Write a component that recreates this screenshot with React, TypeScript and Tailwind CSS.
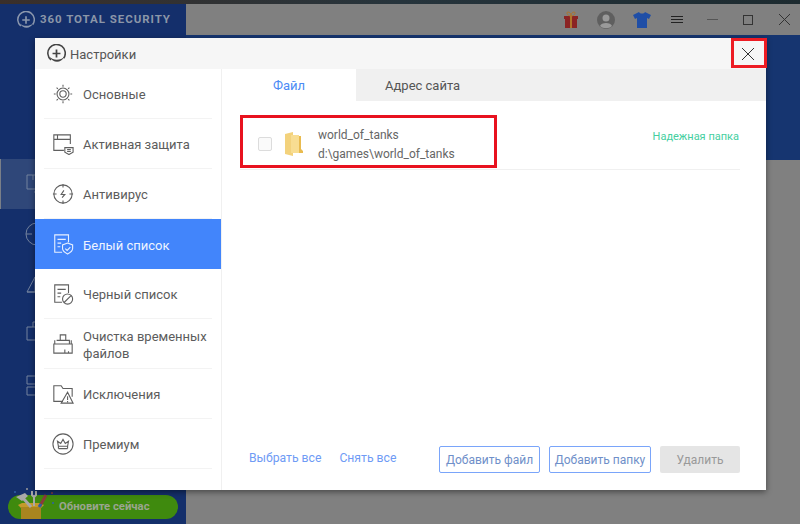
const ink = "#5f5f5f";

function LogoMark({ color, size }: { color: string; size: number }) {
  return (
    <svg width={size} height={size} viewBox="0 0 24 24" fill="none" className="shrink-0">
      <path d="M5 20A11 11 0 1 1 21 18" stroke={color} strokeWidth="2" />
      <path d="M3 16C8 24 17 25 22 16C18 20 9 22 3 16Z" fill={color} />
      <path d="M12 7v10M7 12h10" stroke={color} strokeWidth="2.2" />
    </svg>
  );
}

function Line({ d, color = ink }: { d: string; color?: string }) {
  return (
    <svg width="22" height="22" viewBox="0 0 24 24" fill="none" stroke={color} strokeWidth="1.2" className="shrink-0">
      <path d={d} />
    </svg>
  );
}

const icons: Record<string, string> = {
  gear: "M12 5.500a6.500 6.500 0 1 1 0 13a6.500 6.500 0 1 1 0-13M12 8.500a3.500 3.500 0 1 1 0 7a3.500 3.500 0 1 1 0-7M12 2v2M12 20v2M2 12h2M20 12h2M5 5l1.400 1.400M17.600 17.600L19 19M5 19l1.400-1.400M17.600 6.400L19 5",
  shield: "M13 19H2V2h18v10M2 7h18M6 2v5M14 16h9v5l-4.500 2.500L14 21zM16.500 18h4M16.500 20h4",
  virus: "M12 2a10 10 0 1 1 0 20a10 10 0 1 1 0-20M12 1v4M12 19v4M1 12h4M19 12h4M13 8l-3 4.500h4L11 16",
  white: "M11 21H3V2h15v8M6 7h9M6 11h4M6 15h3M17 11l5.500 2v4c0 3-2.500 4.500-5.500 6c-3-1.500-5.500-3-5.500-6v-4zM14.500 17l2 2l3.500-3.500",
  black: "M11 21H3V2h15v9M6 7h9M6 11h4M6 15h3M17 12a5.500 5.500 0 1 1 0 11a5.500 5.500 0 1 1 0-11M13.500 21l7-7",
  clean: "M9 8V2h6v6M5 8h14v4M3 12V8M21 12V8M2 12h20v10H2zM14 22v-4M18 22v-2",
  except: "M12 20H2V3h8l2 3h10v9M17 10l6 12H10zM17 14.500v4M17 19.500v1.500",
  crown: "M12 1a11 11 0 1 1 0 22a11 11 0 1 1 0-22M7 17h10M7 14.500L6 9l3.500 2.500L12 7l2.500 4.500L18 9l-1 5.500zM7 14.500v2.500M17 14.500v2.500",
};

const menu = [
  { key: "gear", label: "Основные" },
  { key: "shield", label: "Активная защита" },
  { key: "virus", label: "Антивирус" },
  { key: "white", label: "Белый список", active: true },
  { key: "black", label: "Черный список" },
  { key: "clean", label: "Очистка временных файлов" },
  { key: "except", label: "Исключения" },
  { key: "crown", label: "Премиум" },
];

const railIcons = [
  "M27 175h20v14H27zM33 175v5M34 192h12",
  "M26 234a11 11 0 1 1 22 0a11 11 0 1 1-22 0M26 234h6",
  "M27 292l8-15v15zM27 292h8",
  "M27 327h14v13H27zM33 327v-5h5",
  "M27 376h9v8h-9zM27 387h9v8h-9z",
];

function BackWindow() {
  return (
    <div className="flex h-full w-full flex-col bg-[#808080]">
      <div className="h-[4px] bg-gradient-to-r from-[#3a2f2a] via-[#26343c] to-[#1d2b30]" />
      <div className="flex h-[31px] items-center">
        <div className="flex h-full w-[186px] items-center gap-[5px] bg-[#142f6b] pl-[17px]">
          <LogoMark color="#8b97ad" size={18} />
          <span className="text-[11.5px] font-bold tracking-[0.95px] whitespace-nowrap text-[#8b96a8]">360 TOTAL SECURITY</span>
        </div>
        <div className="relative flex h-full flex-1 items-center justify-end pr-[8px]">
          <svg width="16" height="18" viewBox="0 0 16 18" className="mr-[18px]">
            <path d="M1 5h14v3H1zM2 8h12v9H2z" fill="#8b2424" />
            <path d="M7 5h2v12H7z" fill="#b0752a" />
            <path d="M8 5C4 5 3 1 5 1s3 2 3 4c0-2 1-4 3-4s1 4-3 4" fill="none" stroke="#b0752a" />
          </svg>
          <svg width="18" height="18" viewBox="0 0 18 18" className="mr-[18px]">
            <circle cx="9" cy="9" r="9" fill="#5f5f5f" />
            <circle cx="9" cy="7" r="3.500" fill="#9a9a9a" />
            <path d="M3 15c1-4 11-4 12 0c-3 3-9 3-12 0z" fill="#9a9a9a" />
          </svg>
          <svg width="18" height="16" viewBox="0 0 18 16" className="mr-[20px]">
            <path d="M6 0L0 3l2 4l2-1v10h10V6l2 1l2-4l-6-3c-1 2-5 2-6 0z" fill="#1f4ea6" />
          </svg>
          <div className="mr-[24px] flex w-[12px] flex-col gap-[2px]">
            <div className="h-px bg-[#222]" />
            <div className="h-px bg-[#222]" />
            <div className="h-px bg-[#222]" />
          </div>
          <div className="mr-[25px] h-px w-[11px] bg-[#555]" />
          <div className="mr-[26px] h-[10px] w-[10px] border border-[#333]" />
          <svg width="11" height="11" viewBox="0 0 11 11" className="mr-[2px]" stroke="#333">
            <path d="M0 0l11 11M11 0L0 11" />
          </svg>
        </div>
      </div>
      <div className="flex flex-1">
        <div className="relative w-[186px] bg-[#142f6b]">
          <div className="mt-[124px] h-[50px] w-[186px] border-l border-[#7a7f88] bg-[#2f4779]" />
          <svg width="60" height="524" viewBox="0 0 60 524" className="absolute top-[-35px] left-0" fill="none" stroke="#73829e">
            {railIcons.map((d) => (
              <path key={d} d={d} />
            ))}
          </svg>
        </div>
        <div className="flex-1">
          <div className="h-[125px] bg-[#163570]" />
        </div>
      </div>
    </div>
  );
}

function Sidebar() {
  return (
    <div className="flex w-[186px] shrink-0 flex-col">
      {menu.map((item) => (
        <div key={item.key} className={item.active ? "bg-[#4285fb] pl-[9px] pr-[9px]" : "pl-[9px] pr-[9px]"}>
          <div
            className={
              "flex h-[50px] items-center gap-[9px] pl-[8px] text-[13px] leading-[17px] " +
              (item.active ? "text-[#eef4ff]" : "border-b border-[#f3f3f3] text-[#5c5c5c]")
            }
          >
            <Line d={icons[item.key]} color={item.active ? "#e8f0ff" : ink} />
            <span className="w-[130px] pt-[2px]">{item.label}</span>
          </div>
        </div>
      ))}
    </div>
  );
}

function Folder() {
  return (
    <svg width="18" height="24" viewBox="0 0 18 24">
      <path d="M0 2l8-2v24l-8-2z" fill="#f3d27c" />
      <path d="M6 3h8v18H6z" fill="#f8dd92" />
      <path d="M14 4h2v13l2 2v2h-4z" fill="#e9bb4f" />
    </svg>
  );
}

function Content() {
  return (
    <div className="flex min-w-0 flex-1 flex-col border-l border-[#f0f0f0]">
      <div className="flex h-[32px] text-[13px]">
        <div className="flex w-[134px] items-center justify-center pt-[2px] text-[#4a8bf5]">Файл</div>
        <div className="flex flex-1 items-center bg-[#f0f0f0] pt-[2px] pl-[29px] text-[#555]">Адрес сайта</div>
      </div>
      <div className="flex flex-1 flex-col pr-[26px] pl-[18px]">
        <div className="flex h-[69px] items-center border-b border-[#f0f0f0] pt-[18px] text-[12px]">
          <div className="ml-[18px] h-[14px] w-[14px] rounded-[2px] border border-[#dcdcdc] bg-[#fafafa]" />
          <div className="ml-[13px]">
            <Folder />
          </div>
          <div className="ml-[15px] flex flex-col gap-[1px] leading-[18px] text-[#666]">
            <span>world_of_tanks</span>
            <span>d:\games\world_of_tanks</span>
          </div>
          <span className="mb-[14px] ml-auto pr-px text-[11px] text-[#45cf9f]">Надежная папка</span>
        </div>
        <div className="mt-auto mb-[17px] flex items-center text-[12.2px]">
          <span className="ml-[9px] pb-[2px] text-[#6f9bf5]">Выбрать все</span>
          <span className="ml-[18px] pb-[2px] text-[#6f9bf5]">Снять все</span>
          <div className="ml-auto flex gap-[9px] text-[12px]">
            <div className="flex h-[27px] w-[101px] items-center justify-center rounded-[2px] border border-[#7aa5fa] text-[#6f8fc9]">Добавить файл</div>
            <div className="flex h-[27px] w-[102px] items-center justify-center rounded-[2px] border border-[#7aa5fa] text-[#6f8fc9]">Добавить папку</div>
            <div className="flex h-[27px] w-[80px] items-center justify-center rounded-[2px] bg-[#e5e5e5] text-[#999]">Удалить</div>
          </div>
        </div>
      </div>
    </div>
  );
}

function Dialog() {
  return (
    <div className="absolute top-[38px] left-[35px] flex h-[452px] w-[731px] flex-col bg-white shadow-[0_2px_6px_rgba(0,0,0,0.45)]">
      <div className="flex h-[31px] shrink-0 items-center bg-[#f6f6f6] pl-[12px]">
        <LogoMark color="#444" size={19} />
        <span className="ml-[4px] pt-[2px] text-[13px] text-[#555]">Настройки</span>
        <svg width="12" height="12" viewBox="0 0 12 12" stroke="#333" className="mr-[12px] ml-auto">
          <path d="M0 0l12 12M12 0L0 12" />
        </svg>
      </div>
      <div className="flex flex-1">
        <Sidebar />
        <Content />
      </div>
    </div>
  );
}

function UpdateButton() {
  return (
    <div className="absolute top-[495px] left-[8px] flex h-[24px] w-[170px] items-center rounded-full bg-[#3f8a0e] pl-[51px]">
      <svg width="48" height="32" viewBox="0 0 48 32" className="absolute top-[-8px] left-[2px]">
        <path d="M8 18l4-2h18l4 2l-3 3H11z" fill="#c49a2c" />
        <path d="M11 20h20v12H11z" fill="#a9851f" />
        <path d="M6 10l9-4l3 3l-6 5z" fill="#a8a8a8" />
        <path d="M13 11l8 9" stroke="#a8a8a8" strokeWidth="3" />
        <path d="M22 4v4l2 2l2-2V4M24 10v9" stroke="#a8a8a8" strokeWidth="2" fill="none" />
        <path d="M36 8l-6 11" stroke="#8a3b3b" strokeWidth="3" />
        <path d="M31 17l-2 3" stroke="#2f5fa8" strokeWidth="3" />
        <circle cx="17" cy="2" r="1" fill="#9a9a9a" />
        <circle cx="33" cy="1" r="1" fill="#a58a22" />
        <circle cx="42" cy="6" r="1" fill="#8a3b3b" />
        <circle cx="43" cy="16" r="1" fill="#2f5fa8" />
        <circle cx="5" cy="5" r="1" fill="#2f5fa8" />
      </svg>
      <span className="text-[11.3px] font-bold whitespace-nowrap text-[#9ba58f]">Обновите сейчас</span>
    </div>
  );
}

export default function App() {
  return (
    <div className="relative h-[524px] w-[800px] overflow-hidden font-['Roboto',sans-serif]">
      <BackWindow />
      <UpdateButton />
      <Dialog />
      {/* red marks drawn over the screenshot */}
      <div className="absolute top-[38px] left-[731px] h-[30px] w-[36px] border-[3px] border-[#ed1c24]" />
      <div className="absolute top-[115px] left-[240px] h-[53px] w-[257px] border-[3px] border-[#e8121f]" />
    </div>
  );
}
